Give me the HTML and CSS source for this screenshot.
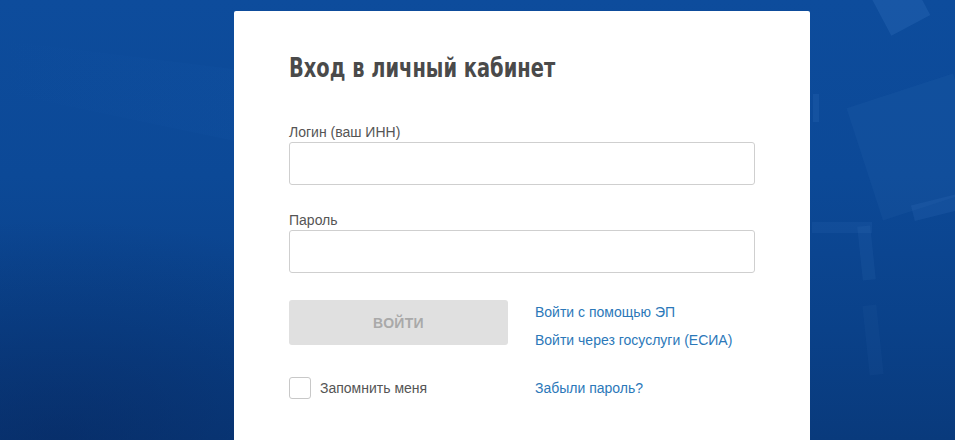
FILE: index.html
```html
<!DOCTYPE html>
<html lang="ru">
<head>
<meta charset="utf-8">
<title>Вход в личный кабинет</title>
<link rel="stylesheet" href="styles.css">
</head>
<body>
<div class="decor" aria-hidden="true">
  <div class="wedge"></div>
  <div class="sq sq1"></div>
  <div class="sq sq2"></div>
  <div class="sq sq3"></div>
  <div class="sq sq4"></div>
  <div class="sq sq5"></div>
  <div class="sq sq6"></div>
  <div class="sq sq7"></div>
</div>
<main class="card">
  <h1 class="title"><span class="title-text">Вход в личный кабинет</span></h1>
  <div class="field">
    <label class="label" for="login">Логин (ваш ИНН)</label>
    <input class="input" id="login" type="text">
  </div>
  <div class="field">
    <label class="label" for="pass">Пароль</label>
    <input class="input" id="pass" type="password">
  </div>
  <div class="actions">
    <button class="btn" type="button">Войти</button>
    <div class="links">
      <a class="link" href="#">Войти с помощью ЭП</a>
      <a class="link" href="#">Войти через госуслуги (ЕСИА)</a>
    </div>
  </div>
  <div class="bottom">
    <label class="remember"><span class="checkbox"></span>Запомнить меня</label>
    <a class="link" href="#">Забыли пароль?</a>
  </div>
</main>
</body>
</html>
```
FILE: styles.css
```css
html, body {
  margin: 0;
  height: 440px;
  overflow: hidden;
}
body {
  position: relative;
  font-family: "Liberation Sans", Arial, sans-serif;
  background:
    radial-gradient(ellipse 420px 220px at 60px 440px, rgba(6, 36, 90, 0.5), rgba(6, 36, 90, 0) 100%),
    linear-gradient(to bottom, #0d4c9c 0%, #0c4997 40%, #0a4189 75%, #093a7c 100%);
  padding-top: 11px;
  box-sizing: border-box;
}
.decor {
  position: absolute;
  inset: 0;
  overflow: hidden;
  pointer-events: none;
}
.wedge {
  position: absolute;
  left: 0;
  top: 0;
  width: 955px;
  height: 160px;
  background: linear-gradient(to right, rgba(30, 100, 180, 0) 0%, rgba(30, 100, 185, 0.3) 100%);
  clip-path: polygon(0 92px, 240px 142px, 240px 70px, 0 40px);
}
.sq {
  position: absolute;
  background: rgba(80, 140, 210, 0.08);
}
.sq1 { left: 878px; top: -18px; width: 44px; height: 46px; transform: rotate(-28deg); background: rgba(90, 150, 215, 0.16); }
.sq2 { left: 862px; top: 88px; width: 112px; height: 118px; transform: rotate(-18deg); }
.sq3 { left: 912px; top: 198px; width: 60px; height: 16px; transform: rotate(-14deg); background: rgba(80, 140, 210, 0.12); }
.sq4 { left: 813px; top: 94px; width: 6px; height: 28px; background: rgba(80, 140, 210, 0.12); }
.sq5 { left: 812px; top: 222px; width: 60px; height: 11px; background: rgba(80, 140, 210, 0.1); }
.sq6 { left: 860px; top: 226px; width: 13px; height: 54px; transform: rotate(-6deg); background: rgba(80, 140, 210, 0.1); }
.sq7 { left: 866px; top: 305px; width: 14px; height: 70px; transform: rotate(-6deg); background: rgba(80, 140, 210, 0.06); }

.card {
  position: relative;
  margin-left: 234px;
  width: 576px;
  height: 440px;
  box-sizing: border-box;
  background: #fff;
  border-radius: 2px;
  padding: 41px 55px 0;
}
.title {
  margin: 0 0 40px;
  font-family: "DejaVu Sans Condensed", "Liberation Sans", sans-serif;
  font-weight: 700;
  font-size: 27px;
  line-height: 32px;
  color: #4a4a4a;
  white-space: nowrap;
}
.title-text {
  display: inline-block;
  transform: scaleX(0.8);
  transform-origin: left center;
}
.field {
  display: flex;
  flex-direction: column;
  margin-bottom: 27px;
}
.label {
  font-size: 14px;
  line-height: 16px;
  color: #555;
  margin-bottom: 2px;
}
.input {
  height: 43px;
  box-sizing: border-box;
  border: 1px solid #cfcfcf;
  border-radius: 3px;
  background: #fff;
  margin: 0;
}
.actions {
  display: grid;
  grid-template-columns: 219px 1fr;
  column-gap: 27px;
  margin-top: 0;
}
.btn {
  height: 45px;
  border: 0;
  border-radius: 3px;
  background: #e0e0e0;
  color: #a9a9a9;
  font-family: "Liberation Sans", Arial, sans-serif;
  font-weight: 700;
  font-size: 14px;
  text-transform: uppercase;
  letter-spacing: 0.3px;
}
.links {
  display: flex;
  flex-direction: column;
  gap: 12px;
  padding-top: 4px;
}
.link {
  font-size: 14px;
  line-height: 16px;
  color: #2b78b9;
  text-decoration: none;
}
.bottom {
  display: grid;
  grid-template-columns: 219px 1fr;
  column-gap: 27px;
  align-items: center;
  margin-top: 29px;
}
.remember {
  display: flex;
  align-items: center;
  gap: 9px;
  font-size: 14px;
  color: #555;
}
.checkbox {
  width: 22px;
  height: 22px;
  box-sizing: border-box;
  border: 1px solid #c8c8c8;
  border-radius: 3px;
  background: #fff;
}
```
